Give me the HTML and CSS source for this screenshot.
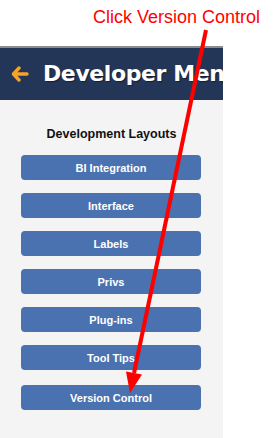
FILE: index.html
```html
<!DOCTYPE html>
<html lang="en">
<head>
    <meta charset="UTF-8">
    <meta name="viewport" content="width=device-width, initial-scale=1.0">
    <title>Developer Menu</title>
    <link rel="stylesheet" href="styles.css">
</head>
<body>

    <div class="note">Click Version Control</div>

    <div class="app">
        <div class="topbar">
            <svg class="back" width="18" height="16" viewBox="0 0 18 16">
                <path d="M8 2 L2.5 8 L8 14 M3 8 H16" fill="none" stroke="#f7a325" stroke-width="3.4" stroke-linecap="round" stroke-linejoin="round"/>
            </svg>
            <h1>Developer Menu</h1>
        </div>

        <div class="panel">
            <h2>Development Layouts</h2>
            <div class="menu">
                <button type="button">BI Integration</button>
                <button type="button">Interface</button>
                <button type="button">Labels</button>
                <button type="button">Privs</button>
                <button type="button">Plug-ins</button>
                <button type="button">Tool Tips</button>
                <button type="button" class="last">Version Control</button>
            </div>
        </div>
    </div>

    <svg class="pointer" width="279" height="438" viewBox="0 0 279 438">
        <line x1="206" y1="30" x2="134" y2="373" stroke="#ff0000" stroke-width="4"/>
        <polygon points="130,393 142,374.6 126,371.4" fill="#ff0000"/>
    </svg>

</body>
</html>
```

FILE: styles.css
```css
html, body {
    margin: 0;
    padding: 0;
    background: white;
    height: 100%;
}
body {
    position: relative;
    font-family: "Liberation Sans", Arial, sans-serif;
    overflow: hidden;
}
.note {
    position: absolute;
    top: 7px;
    left: 93px;
    font-size: 18px;
    line-height: 20px;
    color: #ff0000;
    white-space: nowrap;
}
.pointer {
    position: absolute;
    top: 0;
    left: 0;
    pointer-events: none;
}
.app {
    width: 223px;
    padding-top: 46px;
    height: 100%;
    box-sizing: border-box;
    display: flex;
    flex-direction: column;
}
.topbar {
    border-top: 2px solid #8c8c8c;
    background-color: #243658;
    height: 52px;
    display: flex;
    align-items: center;
    padding-left: 11px;
    overflow: hidden;
    white-space: nowrap;
}
.back {
    flex: none;
    margin-right: 14px;
}
h1 {
    margin: 0;
    font-family: "DejaVu Sans", Verdana, sans-serif;
    font-size: 22px;
    font-weight: bold;
    letter-spacing: -0.4px;
    line-height: 52px;
    color: white;
    text-shadow: 1px 1px 1px rgba(0, 0, 0, 0.45);
}
.panel {
    flex: 1;
    background-color: #f4f4f4;
    padding-top: 26px;
}
h2 {
    margin: 0 0 13px 0;
    font-size: 12.5px;
    line-height: 16px;
    font-weight: bold;
    color: #111;
    text-align: center;
}
.menu {
    display: flex;
    flex-direction: column;
    gap: 13px;
    padding: 0 22px 0 21px;
}
button {
    height: 25px;
    border: none;
    border-radius: 4px;
    background-color: #4b72b0;
    color: white;
    font-family: "Liberation Sans", Arial, sans-serif;
    font-size: 11px;
    font-weight: bold;
    padding: 0;
    cursor: pointer;
}
button.last {
    margin-top: 2px;
}
```
